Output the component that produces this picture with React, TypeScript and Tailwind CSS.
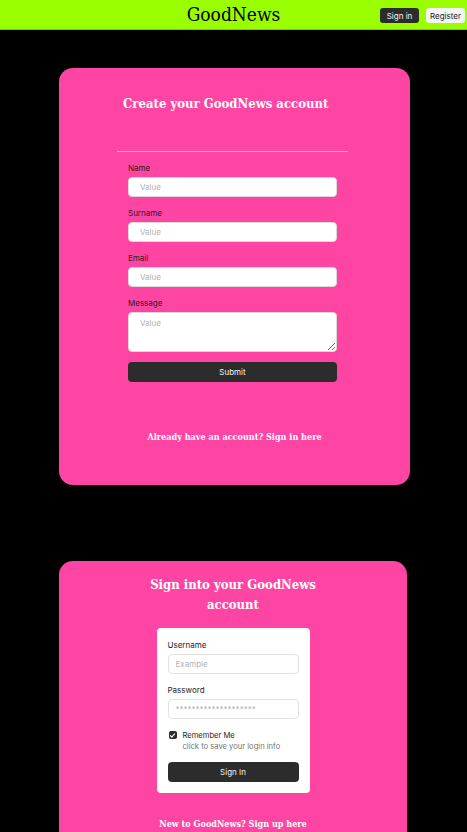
const serif = "font-['DejaVu_Serif_Condensed','DejaVu_Serif',serif] font-stretch-condensed";
const sans = "font-['Inter',sans-serif]";

const Field = ({ label, area = false }: { label: string; area?: boolean }) => (
  <div className="flex flex-col">
    <label className={`${sans} text-[8px] leading-[10px] text-[#1e1e1e]`}>{label}</label>
    {area ? (
      <textarea
        placeholder="Value"
        className={`${sans} mt-[4px] h-[40px] w-full resize-y rounded-[4px] border border-[#d9d9d9] bg-white px-[11px] py-[5px] text-[8px] leading-[10px] text-[#1e1e1e] placeholder:text-[#b3b3b3] outline-none`}
      />
    ) : (
      <input
        placeholder="Value"
        className={`${sans} mt-[4px] h-[20px] w-full rounded-[4px] border border-[#d9d9d9] bg-white px-[11px] text-[8px] text-[#1e1e1e] placeholder:text-[#b3b3b3] outline-none`}
      />
    )}
  </div>
);

const Header = () => (
  <header className="relative flex h-[30px] items-center justify-center border-b border-[#78c800] bg-[#99ff00]">
    <span className={`${serif} text-[19px] leading-none text-black`}>GoodNews</span>
    <div className="absolute right-[2px] top-[8px] flex gap-[7px]">
      <button className={`${sans} h-[15px] w-[39px] rounded-[3px] bg-[#2c2c2c] text-[8px] text-[#f5f5f5]`}>Sign in</button>
      <button className={`${sans} h-[15px] w-[39px] rounded-[3px] bg-[#f5f5f5] text-[8px] text-[#1e1e1e]`}>Register</button>
    </div>
  </header>
);

const RegisterCard = () => (
  <section className="ml-[59px] mt-[38px] w-[351px] rounded-[14px] bg-[#ff45a3] pt-[26px] pb-[41px]">
    <h1 className={`${serif} pl-[64px] text-[13px] font-bold leading-[20px] text-white`}>Create your GoodNews account</h1>
    <div className="ml-[58px] mt-[37px] h-px w-[231px] bg-white/50" />
    <form className="ml-[69px] mt-[11px] flex w-[209px] flex-col gap-[11px]">
      <Field label="Name" />
      <Field label="Surname" />
      <Field label="Email" />
      <Field label="Message" area />
      <button type="button" className={`${sans} mt-[-1px] h-[20px] w-full rounded-[4px] bg-[#2c2c2c] text-[8px] text-[#f5f5f5]`}>
        Submit
      </button>
    </form>
    <p className={`${serif} mt-[48px] text-center text-[9px] font-bold leading-[14px] text-white`}>
      Already have an account? Sign in here
    </p>
  </section>
);

const SignInCard = () => (
  <section className="ml-[59px] mt-[76px] w-[348px] rounded-t-[14px] bg-[#ff45a3] pt-[14px] pb-[30px]">
    <h2 className={`${serif} mx-auto w-[180px] text-center text-[13px] font-bold leading-[20px] text-white`}>
      Sign into your GoodNews account
    </h2>
    <div className="mx-auto mt-[13px] flex w-[153px] flex-col rounded-[4px] bg-white px-[11px] pt-[12px] pb-[11px]">
      <label className={`${sans} text-[8px] leading-[10px] text-[#1e1e1e]`}>Username</label>
      <input
        placeholder="Example"
        className={`${sans} mt-[4px] h-[20px] w-full rounded-[4px] border border-[#e3e3e3] bg-white px-[7px] text-[8px] placeholder:text-[#b3b3b3] outline-none`}
      />
      <label className={`${sans} mt-[11px] text-[8px] leading-[10px] text-[#1e1e1e]`}>Password</label>
      <input
        placeholder="********************"
        className={`${sans} mt-[4px] h-[20px] w-full rounded-[4px] border border-[#e3e3e3] bg-white px-[7px] text-[8px] placeholder:text-[#b3b3b3] outline-none`}
      />
      <div className="mt-[11px] flex items-start gap-[6px] pl-[1px]">
        <span className="mt-[1px] flex h-[8px] w-[8px] items-center justify-center rounded-[2px] bg-[#2c2c2c]">
          <svg viewBox="0 0 10 10" className="h-[7px] w-[7px]" fill="none" stroke="white" strokeWidth="1.6" strokeLinecap="round" strokeLinejoin="round">
            <path d="M2 5.2l2 2 4-4.4" />
          </svg>
        </span>
        <div className={`${sans} flex flex-col text-[7.6px] leading-[11px]`}>
          <span className="text-[#1e1e1e]">Remember Me</span>
          <span className="text-[#757575]">click to save your login info</span>
        </div>
      </div>
      <button type="button" className={`${sans} mt-[10px] h-[20px] w-full rounded-[4px] bg-[#2c2c2c] text-[8px] text-[#f5f5f5]`}>
        Sign In
      </button>
    </div>
    <p className={`${serif} mt-[24px] text-center text-[9px] font-bold leading-[14px] text-white`}>
      New to GoodNews? Sign up here
    </p>
  </section>
);

export default function App() {
  return (
    <div className="h-[832px] overflow-hidden bg-black">
      <Header />
      <RegisterCard />
      <SignInCard />
    </div>
  );
}
